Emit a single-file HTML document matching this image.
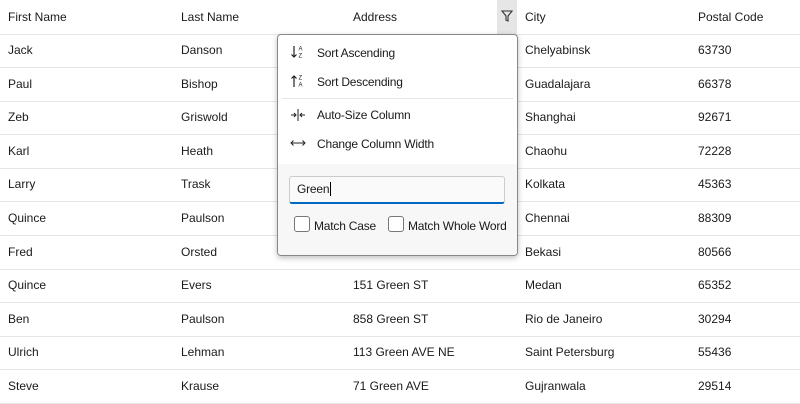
<!DOCTYPE html><html><head><style>
body{margin:0;width:800px;height:404px;overflow:hidden;background:#fff;font-family:"Segoe UI","Liberation Sans",sans-serif;font-size:12px;color:#1a1a1a;position:relative}
.row{position:absolute;left:0;width:800px;height:33px;border-bottom:1px solid #e5e5e5}
.row span{position:absolute;top:9px;white-space:nowrap}
.hdr span{top:10px}
.pop{position:absolute;left:277px;top:34px;width:239px;height:220px;background:#fff;border:1px solid #888;border-radius:4px;box-shadow:0 2px 6px rgba(0,0,0,.25);overflow:hidden;letter-spacing:-0.2px}
.it{position:absolute;left:39px;font-size:12px}
.ic{position:absolute;left:12px}
.low{position:absolute;left:0;top:129px;width:239px;height:91px;background:#f7f7f7}
.tb{position:absolute;left:11px;top:12px;width:214px;height:25px;border:1px solid #ccc;border-bottom:2px solid #0067c0;border-radius:3px;background:#fafafa}
.cb{position:absolute;top:52px;width:14px;height:14px;border:1px solid #777;border-radius:3px;background:#fff}
</style></head><body>
<div class="row hdr" style="top:0;height:34px"><span style="left:8px">First Name</span><span style="left:181px">Last Name</span><span style="left:353px">Address</span><span style="left:525px">City</span><span style="left:698px">Postal Code</span></div>
<div style="position:absolute;left:497px;top:0;width:20px;height:34px;background:#e6e6e6"><svg width="20" height="34" viewBox="0 0 20 34"><path d="M5 11h10l-4 5v5l-2-1v-4z" fill="none" stroke="#333" stroke-width="1.1"/></svg></div>
<div id="rows"></div>
<script>
var d=[["Jack","Danson","","Chelyabinsk","63730"],["Paul","Bishop","","Guadalajara","66378"],["Zeb","Griswold","","Shanghai","92671"],["Karl","Heath","","Chaohu","72228"],["Larry","Trask","","Kolkata","45363"],["Quince","Paulson","","Chennai","88309"],["Fred","Orsted","582 Green AVE","Bekasi","80566"],["Quince","Evers","151 Green ST","Medan","65352"],["Ben","Paulson","858 Green ST","Rio de Janeiro","30294"],["Ulrich","Lehman","113 Green AVE NE","Saint Petersburg","55436"],["Steve","Krause","71 Green AVE","Gujranwala","29514"]];
var h="",x=[8,181,353,525,698];
d.forEach(function(r,i){h+='<div class="row" style="top:'+(34+i*33.6)+'px">';r.forEach(function(c,j){h+='<span style="left:'+x[j]+'px">'+c+'</span>'});h+='</div>'});
document.getElementById("rows").innerHTML=h;
</script>
<div class="pop">
<svg class="ic" style="top:9px" width="16" height="16" viewBox="0 0 16 16"><path d="M4 2v11M1.5 10.5L4 13l2.5-2.5" fill="none" stroke="#222" stroke-width="1.2"/><text x="8.5" y="6.5" font-size="6" font-family="Liberation Sans" fill="#222">A</text><text x="8.5" y="13.5" font-size="6" font-family="Liberation Sans" fill="#222">Z</text></svg><span class="it" style="top:11px">Sort Ascending</span>
<svg class="ic" style="top:38px" width="16" height="16" viewBox="0 0 16 16"><path d="M4 14V3M1.5 5.5L4 3l2.5 2.5" fill="none" stroke="#222" stroke-width="1.2"/><text x="8.5" y="6.5" font-size="6" font-family="Liberation Sans" fill="#222">Z</text><text x="8.5" y="13.5" font-size="6" font-family="Liberation Sans" fill="#222">A</text></svg><span class="it" style="top:40px">Sort Descending</span>
<div style="position:absolute;left:4px;right:4px;top:63px;height:1px;background:#e5e5e5"></div>
<svg class="ic" style="top:73px" width="16" height="14" viewBox="0 0 16 14"><path d="M8 1v12M1 7h5M4 5l2 2-2 2M15 7h-5M12 5l-2 2 2 2" fill="none" stroke="#222" stroke-width="1"/></svg><span class="it" style="top:73px">Auto-Size Column</span>
<svg class="ic" style="top:103px" width="16" height="10" viewBox="0 0 16 10"><path d="M1 5h14M3.5 2.5L1 5l2.5 2.5M12.5 2.5L15 5l-2.5 2.5" fill="none" stroke="#222" stroke-width="1"/></svg><span class="it" style="top:102px">Change Column Width</span>
<div class="low"><div class="tb"><span style="position:absolute;left:7px;top:5px">Green<span style="border-left:1px solid #000;margin-left:1px"></span></span></div>
<div class="cb" style="left:16px"></div><span style="position:absolute;left:36px;top:55px">Match Case</span>
<div class="cb" style="left:110px"></div><span style="position:absolute;left:130px;top:55px">Match Whole Word</span></div>
</div>
</body></html>
